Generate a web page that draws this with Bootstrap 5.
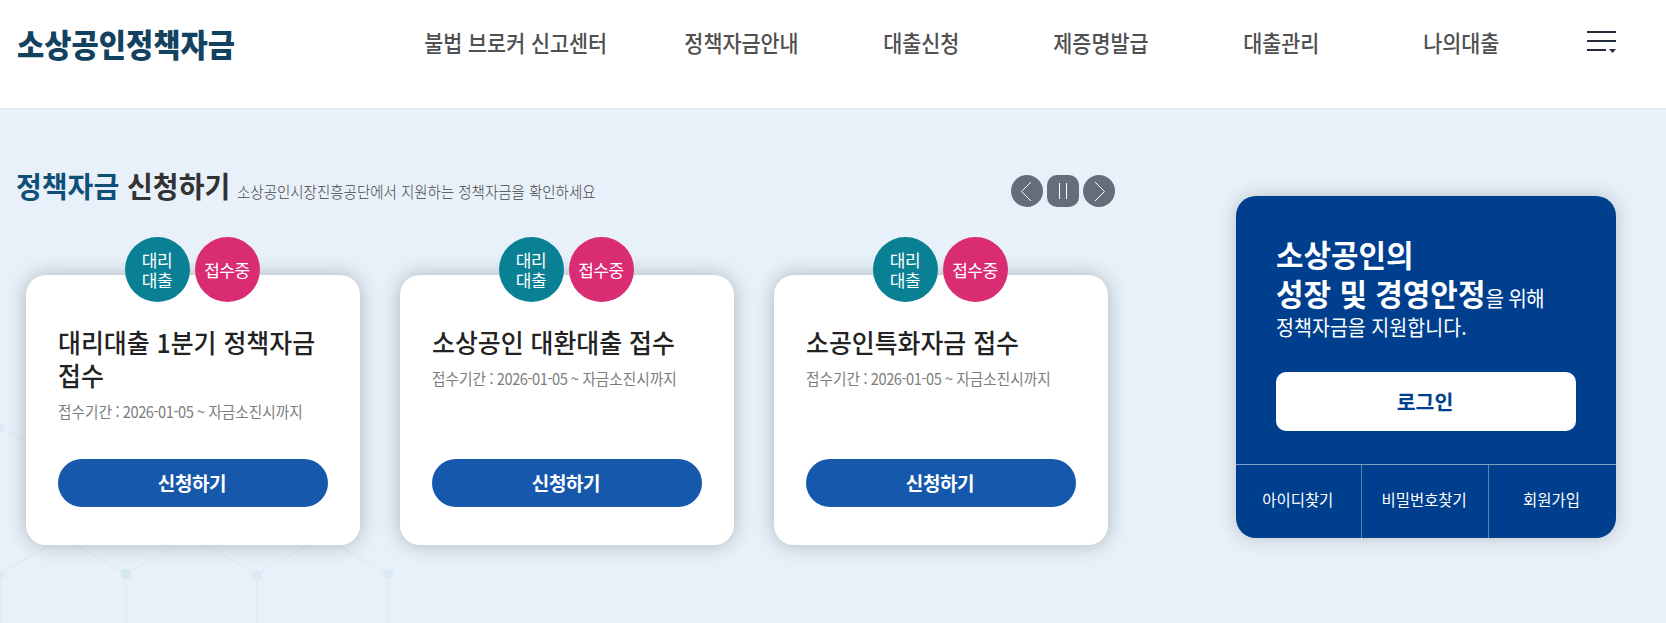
<!DOCTYPE html>
<html lang="ko">
<head>
<meta charset="utf-8">
<meta name="viewport" content="width=device-width, initial-scale=1">
<title>소상공인정책자금</title>
<link href="https://cdn.jsdelivr.net/npm/bootstrap@5.3.0/dist/css/bootstrap.min.css" rel="stylesheet">
<style>
  body { font-family: "Noto Sans CJK KR", sans-serif; color: #222; background: #e8f1f9; height: 623px; overflow: hidden; }
  a { color: inherit; text-decoration: none; }
  /* condensed text */
  .cond { display: inline-block; white-space: nowrap; transform-origin: 0 50%; }

  .site-header { height: 109px; background: #fff; border-bottom: 1px solid #e4e6e8; padding-left: 17px; }
  .brand { width: 364px; margin: 0; padding-top: 19px; font-size: 32px; line-height: 48px; font-weight: 900; color: #12425f; }
  .brand .cond { transform: scaleX(.926); }
  .menu { padding-top: 22px; font-size: 23px; line-height: 40px; font-weight: 500; color: #505050; }
  .menu li { width: 180px; }
  .menu li:first-child { width: 270px; }
  .menu .cond { transform: scaleX(.9); transform-origin: 50% 50%; }
  .burger { margin: 31px 0 0 36px; width: 29px; height: 22px; }

  .stage { height: 514px; }
  .hexes { left: 0; top: 0; }
  .funds { width: 1108px; margin-left: 17px; padding-top: 54px; }
  .funds-head { height: 51px; width: 1098px; }
  .funds-head h2 { width: 220px; margin: 0 0 0 -1px; font-size: 29px; line-height: 44px; font-weight: 700; color: #333; }
  .funds-head h2 b { color: #0f5078; font-weight: 700; }
  .funds-head h2 .cond { transform: scaleX(.967); }
  .funds-head p { margin: 0 0 0 1px; padding-top: 16px; font-size: 16px; line-height: 24px; font-weight: 300; color: #444; }
  .funds-head p .cond { transform: scaleX(.905); }
  .pager { padding-top: 12px; }
  .ctl { width: 32px; height: 32px; background: #646e78; border-radius: 50%; }
  .ctl.pause { border-radius: 10px; }

  .cards { gap: 40px; padding: 61px 0 0 9px; }
  .fund { width: 334px; height: 270px; border-radius: 20px; background: #fff; padding: 50px 32px 38px; box-shadow: 0 0 20px rgba(0,0,0,.25); }
  .tags { top: -38px; left: 0; right: 2px; gap: 5px; }
  .tag { width: 65px; height: 65px; border-radius: 50%; color: #fff; font-size: 17px; line-height: 20px; text-align: center; letter-spacing: -.4px; }
  .tag-agent { background: #0a8094; }
  .tag-open { background: #d92c73; }
  .fund h3 { margin: 0; font-size: 26px; line-height: 33px; font-weight: 500; color: #222; }
  .fund h3 .cond { transform: scaleX(.957); }
  .fund p { margin: 8px 0 0; font-size: 16px; line-height: 24px; color: #7d7d7d; }
  .fund p .cond { transform: scaleX(.915); }
  .fund p .num { letter-spacing: -.5px; }
  .apply { height: 48px; border-radius: 24px; background: #1558ac; color: #fff; font-size: 19px; font-weight: 700; letter-spacing: -.4px; padding-right: 2px; }

  .login { width: 380px; height: 342px; margin: 87px 0 0 111px; border-radius: 20px; background: #003f8e; color: #fff; box-shadow: 0 0 20px rgba(0,0,0,.2); overflow: hidden; }
  .login-body { height: 268px; padding: 38px 40px 0; }
  .lead-line { font-size: 31px; line-height: 39px; font-weight: 700; height: 39px; }
  .lead-line .cond { transform: scaleX(.965); }
  .lead-line small { font-size: 21px; font-weight: 400; letter-spacing: -.8px; }
  .sub-line { font-size: 21px; line-height: 28px; height: 28px; margin-bottom: 32px; }
  .sub-line .cond { transform: scaleX(.93); }
  .signin { height: 59px; border-radius: 10px; background: #fff; color: #003f8e; font-size: 20.5px; font-weight: 700; padding: 0 2px 1px 0; }
  .links { height: 74px; border-top: 1px solid rgba(255,255,255,.5); font-size: 16px; }
  .links a { width: 127px; border-left: 1px solid rgba(255,255,255,.35); padding: 0 2px 5px 0; }
  .links a:first-child { width: 125px; border-left: 0; }
  .links .cond { transform: scaleX(.965); transform-origin: 50% 50%; }
</style>
</head>
<body>
<header class="site-header d-flex">
  <h1 class="brand"><a href="#" class="cond">소상공인정책자금</a></h1>
  <ul class="menu list-unstyled d-flex text-center mb-0">
    <li><a href="#" class="cond">불법 브로커 신고센터</a></li>
    <li><a href="#" class="cond">정책자금안내</a></li>
    <li><a href="#" class="cond">대출신청</a></li>
    <li><a href="#" class="cond">제증명발급</a></li>
    <li><a href="#" class="cond">대출관리</a></li>
    <li><a href="#" class="cond">나의대출</a></li>
  </ul>
  <svg class="burger" viewBox="0 0 29 22" fill="#232a38"><path d="M0 0h29v2H0zM0 9h29v2H0zM0 18h19v2H0zM22 18h7l-3.5 4z"/></svg>
</header>

<main class="stage position-relative d-flex align-items-start">
  <svg class="hexes position-absolute" width="400" height="514" fill="none" stroke="#dcebf3" stroke-width="1.3">
    <path d="M2 319L63 354M.5 465V514M126 465V514M257 465V514M388 465V514M0 465L63 428L126 465L191 428L257 465L322 428L388 465"/>
    <g fill="#dcebf3" stroke="none"><circle cx="0" cy="319" r="5"/><circle cx="0" cy="465" r="5"/><circle cx="126" cy="465" r="5.3" fill="#d7e8ef"/><circle cx="257" cy="466" r="5.3"/><circle cx="388" cy="465" r="5.3"/></g>
  </svg>

  <section class="funds position-relative">
    <div class="funds-head d-flex">
      <h2><span class="cond"><b>정책자금</b> 신청하기</span></h2>
      <p><span class="cond">소상공인시장진흥공단에서 지원하는 정책자금을 확인하세요</span></p>
      <div class="pager d-flex gap-1 ms-auto">
        <svg class="ctl" viewBox="0 0 32 32" fill="none" stroke="#fff" stroke-width="1"><path d="M20 7L10.500 16.500L20 26"/></svg>
        <svg class="ctl pause" viewBox="0 0 32 32" fill="none" stroke="#fff" stroke-width="1"><path d="M12.500 8v16M19.500 8v16"/></svg>
        <svg class="ctl" viewBox="0 0 32 32" fill="none" stroke="#fff" stroke-width="1"><path d="M12 7L21.500 16.500L12 26"/></svg>
      </div>
    </div>
    <div class="cards d-flex">
      <article class="fund position-relative d-flex flex-column">
        <div class="tags position-absolute d-flex justify-content-center">
          <span class="tag tag-agent d-flex align-items-center justify-content-center">대리<br>대출</span>
          <span class="tag tag-open d-flex align-items-center justify-content-center">접수중</span>
        </div>
        <h3><span class="cond">대리대출 1분기 정책자금<br>접수</span></h3>
        <p><span class="cond">접수기간<span class="num"> : 2026-01-05 ~ </span>자금소진시까지</span></p>
        <a href="#" class="apply d-flex align-items-center justify-content-center mt-auto">신청하기</a>
      </article>
      <article class="fund position-relative d-flex flex-column">
        <div class="tags position-absolute d-flex justify-content-center">
          <span class="tag tag-agent d-flex align-items-center justify-content-center">대리<br>대출</span>
          <span class="tag tag-open d-flex align-items-center justify-content-center">접수중</span>
        </div>
        <h3><span class="cond">소상공인 대환대출 접수</span></h3>
        <p><span class="cond">접수기간<span class="num"> : 2026-01-05 ~ </span>자금소진시까지</span></p>
        <a href="#" class="apply d-flex align-items-center justify-content-center mt-auto">신청하기</a>
      </article>
      <article class="fund position-relative d-flex flex-column">
        <div class="tags position-absolute d-flex justify-content-center">
          <span class="tag tag-agent d-flex align-items-center justify-content-center">대리<br>대출</span>
          <span class="tag tag-open d-flex align-items-center justify-content-center">접수중</span>
        </div>
        <h3><span class="cond">소공인특화자금 접수</span></h3>
        <p><span class="cond">접수기간<span class="num"> : 2026-01-05 ~ </span>자금소진시까지</span></p>
        <a href="#" class="apply d-flex align-items-center justify-content-center mt-auto">신청하기</a>
      </article>
    </div>
  </section>

  <aside class="login">
    <div class="login-body">
      <div class="lead-line"><span class="cond">소상공인의</span></div>
      <div class="lead-line"><span class="cond">성장 및 경영안정<small>을 위해</small></span></div>
      <div class="sub-line"><span class="cond">정책자금을 지원합니다.</span></div>
      <a href="#" class="signin d-flex align-items-center justify-content-center">로그인</a>
    </div>
    <nav class="links d-flex">
      <a href="#" class="d-flex align-items-center justify-content-center"><span class="cond">아이디찾기</span></a>
      <a href="#" class="d-flex align-items-center justify-content-center"><span class="cond">비밀번호찾기</span></a>
      <a href="#" class="d-flex align-items-center justify-content-center"><span class="cond">회원가입</span></a>
    </nav>
  </aside>
</main>
<script src="https://cdn.jsdelivr.net/npm/bootstrap@5.3.0/dist/js/bootstrap.bundle.min.js"></script>
</body>
</html>
